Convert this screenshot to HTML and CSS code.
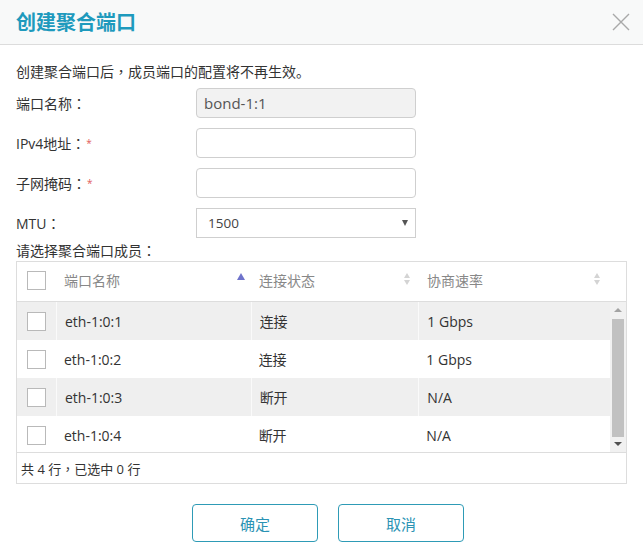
FILE: index.html
```html
<!DOCTYPE html>
<html lang="zh-CN">
<head>
<meta charset="utf-8">
<link rel="stylesheet" href="styles.css">
</head>
<body>
<div class="dialog">
  <div class="dlg-head">
    <h1 class="dlg-title">创建聚合端口</h1>
    <svg class="close" width="18" height="18" viewBox="0 0 18 18"><path d="M1 1 L17 17 M17 1 L1 17" stroke="#a9a9a9" stroke-width="1.4" fill="none"/></svg>
  </div>
  <div class="dlg-body">
    <p class="intro">创建聚合端口后<span class="p" lang="zh-TW">，</span>成员端口的配置将不再生效。</p>
    <div class="form">
      <div class="row">
        <label class="lbl">端口名称<span class="p" lang="zh-TW">：</span></label>
        <div class="input disabled">bond-1:1</div>
      </div>
      <div class="row">
        <label class="lbl">IPv4地址<span class="p" lang="zh-TW">：</span><span class="req">*</span></label>
        <div class="input"></div>
      </div>
      <div class="row">
        <label class="lbl">子网掩码<span class="p" lang="zh-TW">：</span><span class="req">*</span></label>
        <div class="input"></div>
      </div>
      <div class="row">
        <label class="lbl">MTU<span class="p" lang="zh-TW">：</span></label>
        <div class="select"><span>1500</span><span class="caret"></span></div>
      </div>
    </div>
    <p class="sub">请选择聚合端口成员<span class="p" lang="zh-TW">：</span></p>
    <div class="grid">
      <div class="g-head">
        <div class="c c0"><span class="cb"></span></div>
        <div class="c c1">端口名称<span class="sort active"></span></div>
        <div class="c c2">连接状态<span class="sort"><i class="up"></i><i class="dn"></i></span></div>
        <div class="c c3">协商速率<span class="sort"><i class="up"></i><i class="dn"></i></span></div>
      </div>
      <div class="g-body">
        <div class="g-rows">
          <div class="g-row odd"><div class="c c0"><span class="cb"></span></div><div class="c c1">eth-1:0:1</div><div class="c c2">连接</div><div class="c c3">1 Gbps</div></div>
          <div class="g-row"><div class="c c0"><span class="cb"></span></div><div class="c c1">eth-1:0:2</div><div class="c c2">连接</div><div class="c c3">1 Gbps</div></div>
          <div class="g-row odd"><div class="c c0"><span class="cb"></span></div><div class="c c1">eth-1:0:3</div><div class="c c2">断开</div><div class="c c3">N/A</div></div>
          <div class="g-row"><div class="c c0"><span class="cb"></span></div><div class="c c1">eth-1:0:4</div><div class="c c2">断开</div><div class="c c3">N/A</div></div>
        </div>
        <div class="scroll">
          <div class="s-btn"><span class="tri-up"></span></div>
          <div class="s-track"><div class="s-thumb"></div></div>
          <div class="s-btn"><span class="tri-dn"></span></div>
        </div>
      </div>
      <div class="g-foot">共 4 行<span class="p" lang="zh-TW">，</span>已选中 0 行</div>
    </div>
    <div class="actions">
      <button class="btn">确定</button>
      <button class="btn">取消</button>
    </div>
  </div>
</div>
</body>
</html>
```
FILE: styles.css
```css
* { box-sizing: border-box; }
html, body { margin: 0; padding: 0; background: #fff; }
body {
  font-family: "Open Sans", "Noto Sans CJK SC", sans-serif;
  font-size: 14px;
  color: #333;
  width: 643px;
  height: 552px;
  overflow: hidden;
}
.p { font-family: "Noto Sans CJK TC", sans-serif; }
.dialog { width: 643px; }
.dlg-head {
  height: 45px;
  background: #f8f9f9;
  border-bottom: 1px solid #dcdcdc;
  display: flex;
  align-items: center;
  justify-content: space-between;
  padding: 0 13px 0 16px;
}
.dlg-title {
  margin: 0;
  font-family: "Noto Sans CJK SC", sans-serif;
  font-size: 20px;
  font-weight: 700;
  color: #1e9abd;
  line-height: 1;
}
.close { display: block; }
.dlg-body { padding: 16px 16px 0 16px; }
.intro {
  margin: 0;
  line-height: 20px;
  font-size: 14px;
}
.form { margin-top: 6px; display: flex; flex-direction: column; gap: 10px; }
.row { display: flex; align-items: center; height: 30px; }
.lbl { width: 180px; font-size: 14px; color: #333; }
.req { color: #e15b5b; font-size: 10px; vertical-align: 2px; margin-left: 1px; }
.input {
  width: 220px;
  height: 30px;
  border: 1px solid #cfcfcf;
  border-radius: 4px;
  background: #fff;
  padding: 0 7px;
  line-height: 28px;
  color: #555;
  font-size: 15px;
}
.input.disabled { background: #f2f2f2; }
.select {
  width: 220px;
  height: 30px;
  border: 1px solid #cfcfcf;
  display: flex;
  align-items: center;
  justify-content: space-between;
  padding: 0 7px 0 11px;
  font-size: 13.5px;
  color: #444;
}
.caret { width: 0; height: 0; border-left: 3.5px solid transparent; border-right: 3.5px solid transparent; border-top: 6px solid #555; }
.sub { margin: 2px 0 0 0; line-height: 20px; font-size: 14px; }
.grid {
  width: 611px;
  border: 1px solid #dddddd;
}
.g-head {
  display: flex;
  height: 40px;
  border-bottom: 1px solid #dddddd;
  color: #888;
}
.g-head .c { padding-bottom: 3px; }
.c {
  display: flex;
  align-items: center;
  padding-left: 8px;
  position: relative;
}
.c0 { width: 39px; padding-left: 10px; }
.c1 { width: 195px; }
.c2 { width: 168px; }
.c3 { width: 192px; }
.g-head .c3 { width: 207px; }
.cb {
  width: 19px;
  height: 19px;
  border: 1px solid #b9b9b9;
  background: #fff;
  display: block;
}
.sort { position: absolute; top: 11px; line-height: 1; }
.sort.active {
  top: 11px; right: 6px;
  width: 0; height: 0;
  border-left: 4px solid transparent; border-right: 4px solid transparent;
  border-bottom: 7px solid #6f73cb;
}
.g-head .c2 .sort { right: 9px; }
.g-head .c3 .sort { right: 26px; }
.sort i { display: block; width: 0; height: 0; border-left: 3.5px solid transparent; border-right: 3.5px solid transparent; }
.sort .up { border-bottom: 5px solid #d4d4d4; margin-bottom: 2px; }
.sort .dn { border-top: 5px solid #d4d4d4; }
.g-body { display: flex; height: 151px; border-bottom: 1px solid #dddddd; }
.g-rows { width: 594px; height: 150px; overflow: hidden; }
.g-row { display: flex; height: 38px; }
.g-row .c { height: 38px; }
.g-row.odd { background: #efefef; }
.g-row.odd .c + .c { border-left: 1px solid #fafafa; }
.scroll { width: 16px; display: flex; flex-direction: column; background: #f1f1f1; }
.s-btn { height: 16px; display: flex; align-items: center; justify-content: center; }
.tri-up { width: 0; height: 0; border-left: 4px solid transparent; border-right: 4px solid transparent; border-bottom: 4px solid #a3a3a3; }
.tri-dn { width: 0; height: 0; border-left: 4px solid transparent; border-right: 4px solid transparent; border-top: 4px solid #505050; }
.s-track { flex: 1; padding: 0 2px; }
.s-thumb { height: 100%; background: #c1c1c1; margin-top: 1px; }
.g-foot { height: 30px; display: flex; align-items: center; padding-left: 4px; font-size: 13px; }
.actions { display: flex; justify-content: center; gap: 20px; padding-left: 13px; margin-top: 20px; }
.btn {
  width: 126px;
  height: 38px;
  border: 1px solid #2e9bb6;
  border-radius: 4px;
  background: #fff;
  color: #2b93b4;
  font-family: "Noto Sans CJK SC", sans-serif;
  font-size: 15px;
}
```
